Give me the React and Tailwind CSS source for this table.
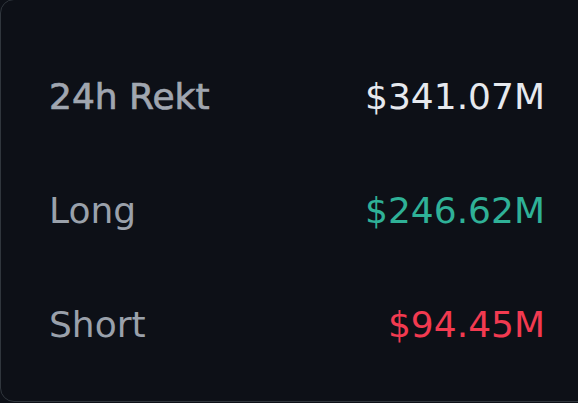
export default function App() {
    const rows = [
        { label: '24h Rekt', value: '$341.07M', labelClass: 'text-[#a0a6b0] [-webkit-text-stroke:0.7px_#a0a6b0]', valueClass: 'text-[#e6e9ee]' },
        { label: 'Long', value: '$246.62M', labelClass: 'text-[#9aa1ab]', valueClass: 'text-[#2fb197]' },
        { label: 'Short', value: '$94.45M', labelClass: 'text-[#9aa1ab]', valueClass: 'text-[#f23a50]' },
    ]

    return (
        <div className="w-[578px] h-[403px] overflow-hidden bg-[#0d1017]">
            <div
                className="w-[600px] h-[403px] -mt-px rounded-[14px] border border-[#30363d] bg-[#0d1017] pt-[40px] pl-[48px] pr-[54px]"
                style={{ fontFamily: '"DejaVu Sans", sans-serif' }}
            >
                {rows.map((row) => (
                    <div key={row.label} className="h-[114px] flex items-center justify-between text-[36px] leading-none">
                        <span className={row.labelClass}>{row.label}</span>
                        <span className={row.valueClass}>{row.value}</span>
                    </div>
                ))}
            </div>
        </div>
    )
}
